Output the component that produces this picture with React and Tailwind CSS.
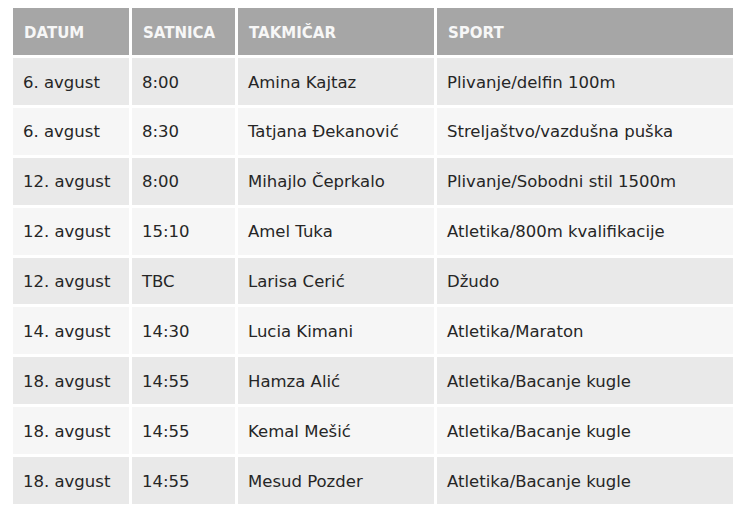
import React from 'react';

const rows = [
  ['6. avgust', '8:00', 'Amina Kajtaz', 'Plivanje/delfin 100m'],
  ['6. avgust', '8:30', 'Tatjana Đekanović', 'Streljaštvo/vazdušna puška'],
  ['12. avgust', '8:00', 'Mihajlo Čeprkalo', 'Plivanje/Sobodni stil 1500m'],
  ['12. avgust', '15:10', 'Amel Tuka', 'Atletika/800m kvalifikacije'],
  ['12. avgust', 'TBC', 'Larisa Cerić', 'Džudo'],
  ['14. avgust', '14:30', 'Lucia Kimani', 'Atletika/Maraton'],
  ['18. avgust', '14:55', 'Hamza Alić', 'Atletika/Bacanje kugle'],
  ['18. avgust', '14:55', 'Kemal Mešić', 'Atletika/Bacanje kugle'],
  ['18. avgust', '14:55', 'Mesud Pozder', 'Atletika/Bacanje kugle'],
];

const headers = ['DATUM', 'SATNICA', 'TAKMIČAR', 'SPORT'];

export default function App() {
  return (
    <div className="w-[750px] h-[521px] bg-white pl-[10px] pt-[5px] font-['DejaVu_Sans',Verdana,sans-serif]">
      <table className="table-fixed border-separate border-spacing-[3px] w-[726px]">
        <colgroup>
          <col className="w-[116px]" />
          <col className="w-[103px]" />
          <col className="w-[196px]" />
          <col className="w-[296px]" />
        </colgroup>
        <thead>
          <tr>
            {headers.map(h => (
              <th key={h} className="h-[47px] bg-[#a6a6a6] text-[#f7f7f7] text-left font-bold text-[15px] p-0 px-[11px] pt-[4px]">
                {h}
              </th>
            ))}
          </tr>
        </thead>
        <tbody>
          {rows.map((r, i) => (
            <tr key={i} className={i % 2 === 0 ? 'bg-[#e9e9e9]' : 'bg-[#f6f6f6]'}>
              {r.map((c, j) => (
                <td key={j} className="h-[46.9px] p-0 px-[10px] pt-[3px] text-[16.5px] text-[#262626] whitespace-nowrap">
                  {c}
                </td>
              ))}
            </tr>
          ))}
        </tbody>
      </table>
    </div>
  );
}
